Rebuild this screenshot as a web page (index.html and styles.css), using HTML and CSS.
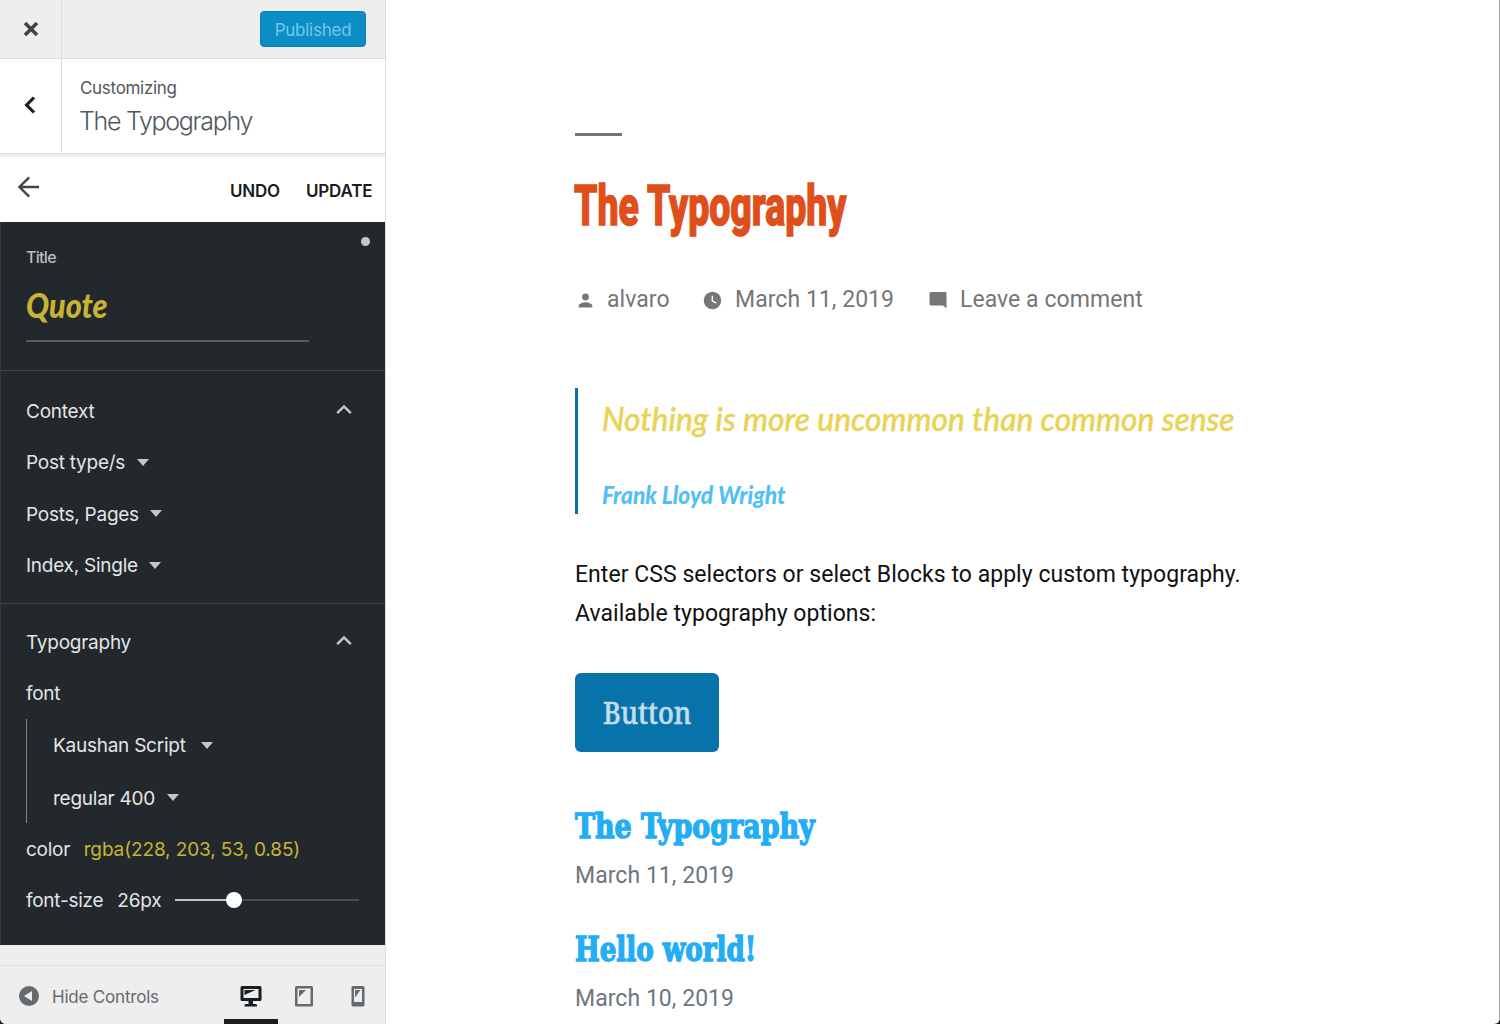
FILE: index.html
```html
<!DOCTYPE html>
<html lang="en">
<head>
<meta charset="utf-8">
<title>Customize: The Typography</title>
<link rel="stylesheet" href="styles.css">
</head>
<body>
<div class="app">
  <aside class="sidebar">
    <header class="topbar">
      <button class="close" aria-label="Close"><svg width="16" height="16" viewBox="0 0 16 16"><path d="M2 2 14 14M14 2 2 14" stroke="#444" stroke-width="3.600"/></svg></button>
      <button class="published">Published</button>
    </header>
    <div class="heading">
      <button class="back" aria-label="Back"><svg width="12" height="18" viewBox="0 0 12 18"><path d="M10 1.500 2.600 9 10 16.500" fill="none" stroke="#191e23" stroke-width="3.200"/></svg></button>
      <div class="heading-text">
        <span class="crumb">Customizing</span>
        <h1 class="panel-title">The Typography</h1>
      </div>
    </div>
    <nav class="actions">
      <svg class="arrow" width="22" height="22" viewBox="0 0 22 22"><path d="M21 11H2M11.200 1.300 1.500 11l9.700 9.700" fill="none" stroke="#444" stroke-width="2.400"/></svg>
      <span class="action undo">UNDO</span>
      <span class="action update">UPDATE</span>
    </nav>
    <div class="editor">
      <section class="title-section">
        <i class="dot"></i>
        <span class="label">Title</span>
        <div class="title-field"><span class="quote-title">Quote</span></div>
      </section>
      <section class="group context">
        <div class="row"><span class="t">Context</span><svg class="chev" width="16" height="11" viewBox="0 0 16 11"><path d="M1.200 9.200 8 2.400l6.800 6.800" fill="none" stroke="#c4c6c7" stroke-width="2.500"/></svg></div>
        <div class="row"><span class="t">Post type/s</span><i class="caret"></i></div>
        <div class="row"><span class="t">Posts, Pages</span><i class="caret"></i></div>
        <div class="row"><span class="t">Index, Single</span><i class="caret"></i></div>
      </section>
      <section class="group typography">
        <div class="row"><span class="t">Typography</span><svg class="chev" width="16" height="11" viewBox="0 0 16 11"><path d="M1.200 9.200 8 2.400l6.800 6.800" fill="none" stroke="#c4c6c7" stroke-width="2.500"/></svg></div>
        <div class="row"><span class="t">font</span></div>
        <div class="nested">
          <div class="row"><span class="t">Kaushan Script</span><i class="caret wide"></i></div>
          <div class="row"><span class="t">regular 400</span><i class="caret"></i></div>
        </div>
        <div class="row"><span class="t">color</span><span class="t value">rgba(228, 203, 53, 0.85)</span></div>
        <div class="row"><span class="t">font-size</span><span class="t px-t">26px</span><span class="slider"><i class="fill"></i><i class="thumb"></i></span></div>
        <div class="row last"><span class="t">font-style</span></div>
      </section>
    </div>
    <footer class="footer">
      <svg class="collapse" width="20" height="20" viewBox="0 0 20 20"><circle cx="10" cy="10" r="10" fill="#656a6f"/><path d="M13 5v10L5 10z" fill="#eee"/></svg>
      <span class="hide">Hide Controls</span>
      <div class="devices">
        <span class="device active"><svg width="22" height="22" viewBox="0 0 22 22"><path fill="#191e23" fill-rule="evenodd" d="M2 0h18q1.500 0 1.500 1.500v12q0 1.500-1.500 1.500h-7v3h3q1 0 1 1.500v1H4.500v-1q0-1.500 1-1.500h3v-3H2Q.5 15 .5 13.500v-12Q.5 0 2 0zM3.500 3v9h15V3z"/><path d="M4.500 4h11L4.500 9z" fill="#191e23"/></svg></span>
        <span class="device"><svg width="20" height="22" viewBox="0 0 20 22"><path fill="#656a6f" fill-rule="evenodd" d="M2.500 0h15q1.500 0 1.500 1.500v17.500q0 1.500-1.500 1.500h-15Q1 20.500 1 19V1.500Q1 0 2.500 0zM3.500 2.500v15.500h13V2.500z"/><path d="M5 4h7l-7 7z" fill="#656a6f"/></svg></span>
        <span class="device"><svg width="14" height="22" viewBox="0 0 14 22"><path fill="#656a6f" fill-rule="evenodd" d="M2 0h10q1.500 0 1.500 1.500v17.500q0 1.500-1.500 1.500H2Q.5 20.500.5 19V1.500Q.5 0 2 0zM3 3v13h8V3z"/><path d="M4 4h5.500L4 11.500z" fill="#656a6f"/></svg></span>
      </div>
    </footer>
  </aside>
  <main class="preview">
    <i class="rule"></i>
    <h2 class="post-title"><span class="post-title-text">The Typography</span></h2>
    <div class="meta">
      <span class="meta-item author"><svg width="20" height="20" viewBox="0 0 20 20"><circle cx="10.500" cy="6" r="3.400" fill="#767676"/><path d="M3.700 16.500v-1.700c0-2.400 4.500-3.600 6.800-3.600s6.800 1.200 6.800 3.600v1.700z" fill="#767676"/></svg><span>alvaro</span></span>
      <span class="meta-item date"><svg width="20" height="20" viewBox="0 0 20 20"><circle cx="10.500" cy="10.500" r="8.700" fill="#767676"/><path d="M10.300 5.800v5l4 2.400" fill="none" stroke="#fff" stroke-width="1.400"/></svg><span>March 11, 2019</span></span>
      <span class="meta-item comment"><svg width="20" height="20" viewBox="0 0 20 20"><path d="M3 2h14.500q1 0 1 1v15.500L15 15.500H3q-1.500 0-1.500-1.500V3.500Q1.500 2 3 2z" fill="#767676"/></svg><span>Leave a comment</span></span>
    </div>
    <blockquote class="quote">
      <p class="quote-text">Nothing is more uncommon than common sense</p>
      <cite class="cite">Frank Lloyd Wright</cite>
    </blockquote>
    <p class="body-text">Enter CSS selectors or select Blocks to apply custom typography.<br>Available typography options:</p>
    <a class="button"><span class="button-text">Button</span></a>
    <article class="entry"><h3 class="entry-title first">The Typography</h3><time class="time">March 11, 2019</time></article>
    <article class="entry"><h3 class="entry-title second">Hello world!</h3><time class="time">March 10, 2019</time></article>
  </main>
</div>
</body>
</html>
```
FILE: styles.css
```css
* { box-sizing: border-box; }
body { margin: 0; background: #191b1d; }
h1, h2, h3, p, blockquote { margin: 0; }
button { border: 0; padding: 0; background: none; font: inherit; }
svg, i { display: block; flex: none; }

.app { display: flex; width: 1500px; height: 1024px; overflow: hidden; background: #fff; border-radius: 0 0 6px 6px; font-family: Roboto, "Liberation Sans", sans-serif; }

/* Sidebar */
.sidebar { display: flex; flex-direction: column; width: 386px; height: 1024px; flex: none; background: #eee; border-right: 1px solid #ddd; font-family: Inter, "Liberation Sans", sans-serif; }
.topbar { display: flex; justify-content: space-between; height: 59px; flex: none; padding-right: 19px; border-bottom: 1px solid #ddd; }
.close { display: flex; align-items: center; justify-content: center; width: 62px; border-right: 1px solid #ddd; }
.published { width: 106px; height: 36px; margin-top: 11px; padding-top: 1px; background: #0b8ec6; border: 1px solid #0a80b8; border-radius: 4px; color: #75c8e7; font-size: 17px; letter-spacing: -.25px; }
.heading { display: flex; height: 95px; flex: none; background: #fff; border-bottom: 1px solid #ddd; }
.back { display: flex; align-items: center; justify-content: center; width: 62px; border-right: 1px solid #ddd; padding: 0 1px 2px 0; }
.heading-text { display: flex; flex-direction: column; padding: 18px 0 0 18px; color: #50575e; white-space: nowrap; }
.crumb { font-size: 17px; line-height: 22px; letter-spacing: -.3px; }
.panel-title { font-size: 25px; font-weight: 300; line-height: 34px; margin: 5px 0 0 -1px; letter-spacing: -1.300px; }
.actions { display: flex; align-items: center; height: 65px; flex: none; margin-top: 3px; padding-left: 18px; background: #fff; }
.arrow { margin-bottom: 5px; }
.action { font-size: 17px; font-weight: 600; line-height: 22px; letter-spacing: -.2px; color: #191b1d; margin-top: 2px; white-space: nowrap; }
.undo { margin-left: 190px; width: 76px; }

.editor { height: 723px; flex: none; overflow: hidden; background: #22282b; border-left: 1px solid #34393c; color: #e4e5e6; }
.title-section { position: relative; height: 149px; padding: 24px 25px 0; border-bottom: 1px solid #3f4447; }
.dot { position: absolute; left: 360px; top: 15px; width: 9px; height: 9px; border-radius: 50%; background: #c4c6c7; }
.label { display: block; font-size: 16px; line-height: 22px; font-weight: 500; letter-spacing: -.700px; color: #bcbebf; }
.title-field { width: 283px; height: 74px; padding-top: 14px; border-bottom: 2px solid #565b5e; }
.quote-title { display: inline-block; font: italic 900 34px/46px Lato, sans-serif; color: #c7b434; transform: scaleX(.9); transform-origin: 0 50%; }
.group { padding: 15px 25px 0; }
.context { height: 233px; border-bottom: 1px solid #3f4447; }
.typography { padding-top: 13px; }
.row { display: flex; align-items: center; height: 51.500px; }
.t { font-size: 19px; line-height: 24px; letter-spacing: -.25px; white-space: nowrap; flex: none; }
.chev { margin: 0 8px 4px auto; }
.caret { width: 0; height: 0; margin: 0 0 2px 11.500px; border: 6.500px solid transparent; border-bottom: 0; border-top: 7px solid #c4c6c7; }
.wide { margin-left: 15.500px; }
.nested { width: 300px; height: 104px; margin: -1px 0 1px; padding: 1px 0 0 26px; border-left: 1px solid #7d8183; }
.nested .row { height: 52.500px; }
.nested .row + .row { height: 52px; }
.value { margin-left: 13.500px; letter-spacing: -.12px; color: #c7b434; }
.px-t { margin-left: 14px; }
.slider { display: flex; align-items: center; width: 184px; height: 16px; margin: 0 0 2px 13.500px; background: linear-gradient(#484d50, #484d50) 0 50% / 100% 2px no-repeat; }
.fill { width: 51px; height: 2px; background: #c4c6c7; }
.thumb { width: 16px; height: 16px; border-radius: 50%; background: #fff; }
.last { padding-top: 4px; }

.footer { display: flex; align-items: center; height: 59px; flex: none; margin-top: auto; padding-left: 19px; border-top: 1px solid #ddd; }
.collapse { margin-top: 2px; }
.hide { width: 172px; margin: 3px 0 0 13px; font-size: 17px; color: #656a6f; letter-spacing: -.2px; white-space: nowrap; }
.devices { display: flex; height: 58px; }
.device { display: flex; justify-content: center; width: 53.500px; padding-top: 20px; }
.active { border-bottom: 5px solid #191e23; }

/* Preview */
.preview { display: flex; flex-direction: column; align-items: flex-start; width: 1114px; height: 1024px; padding: 133px 0 0 189px; border-right: 1px solid #aaa; color: #111; overflow: hidden; }
.preview > * { flex: none; }
.rule { width: 47px; height: 3px; background: #767676; }
.post-title { height: 70px; margin: 35px 0 0 -1px; white-space: nowrap; }
.post-title-text { display: inline-block; font: 800 55px/70px Roboto, sans-serif; color: #df4f1c; transform: scaleX(.681); transform-origin: 0 50%; -webkit-text-stroke: 1.600px #df4f1c; }
.meta { display: flex; height: 36px; margin-top: 41px; color: #767676; font-size: 23px; line-height: 36px; letter-spacing: .05px; white-space: nowrap; }
.meta-item { display: flex; align-items: center; gap: 12px; }
.author { width: 127px; }
.date { width: 226px; gap: 13px; }
.author svg { margin-top: 2px; }
.quote { width: 700px; height: 126px; margin-top: 70px; padding: 8px 0 0 24px; border-left: 3px solid #0873aa; white-space: nowrap; }
.quote-text { width: max-content; font: italic 500 32px/46px Lato, sans-serif; color: #e8d353; transform: scaleX(.99); transform-origin: 0 50%; -webkit-text-stroke: .4px #e8d353; }
.cite { display: block; width: max-content; margin-top: 32px; font: italic 900 25px/40px Lato, sans-serif; color: #53bff8; transform: scaleX(.912); transform-origin: 0 50%; }
.body-text { margin-top: 42px; font-size: 23px; line-height: 38.500px; letter-spacing: .045px; white-space: nowrap; }
.button { display: flex; justify-content: center; align-items: center; width: 144px; height: 79px; margin-top: 40px; background: #0873aa; border-radius: 6px; color: #c1dceb; }
.button-text { font: 500 30px/40px "Noto Serif", "Liberation Serif", serif; transform: scaleX(.9); -webkit-text-stroke: .6px #c1dceb; }
.entry { height: 123px; }
.button + .entry { margin-top: 52px; }
.entry-title { width: max-content; font: 900 34px/44px "DejaVu Serif Condensed", "DejaVu Serif", serif; color: #22adf6; transform-origin: 0 50%; -webkit-text-stroke: 1.400px #22adf6; }
.first { transform: scaleX(.88); }
.second { transform: scaleX(.855); }
.time { display: block; font-size: 23px; line-height: 36px; margin-top: 10px; letter-spacing: .05px; color: #6c7781; }
```
